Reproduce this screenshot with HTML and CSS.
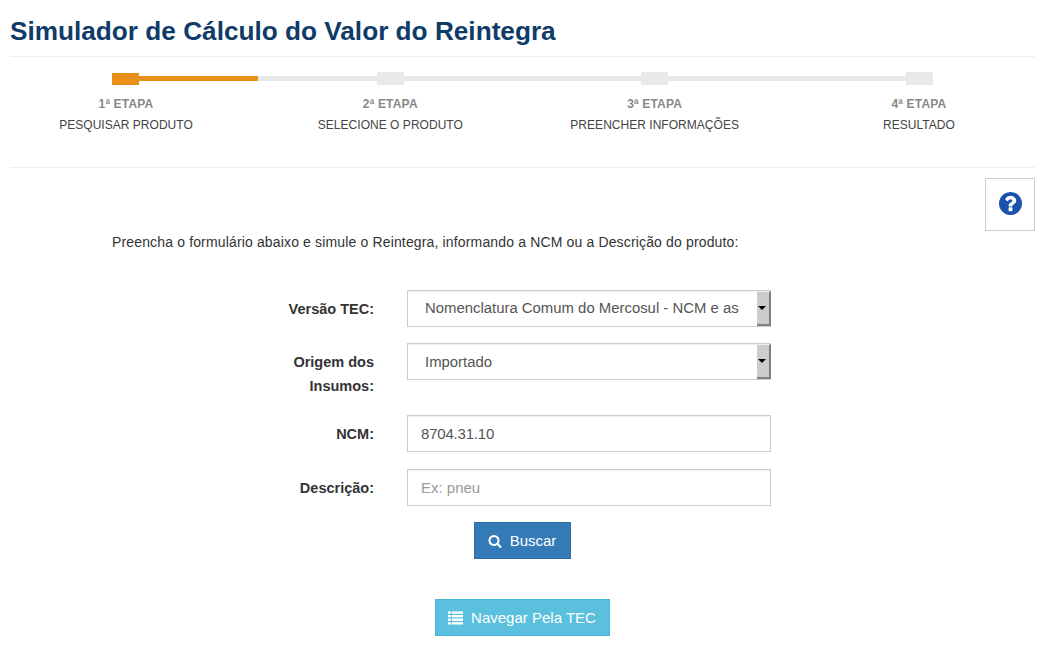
FILE: index.html
```html
<!doctype html>
<html lang="pt-BR">
<head>
    <meta charset="utf-8">
    <title>Simulador de Cálculo do Valor do Reintegra</title>
    <link rel="stylesheet" href="styles.css">
</head>
<body>
<h1 class="page-title">Simulador de Cálculo do Valor do Reintegra</h1>

<!-- Barra de etapas -->
<div class="steps">
    <div class="steps-bar">
        <span class="step-mark step-mark-active"></span>
        <span class="step-line"><span class="step-line-fill"></span></span>
        <span class="step-mark"></span>
        <span class="step-line"></span>
        <span class="step-mark"></span>
        <span class="step-line"></span>
        <span class="step-mark"></span>
    </div>
    <div class="steps-labels">
        <div class="step-label"><b>1ª ETAPA</b><span>PESQUISAR PRODUTO</span></div>
        <div class="step-label"><b>2ª ETAPA</b><span>SELECIONE O PRODUTO</span></div>
        <div class="step-label"><b>3ª ETAPA</b><span>PREENCHER INFORMAÇÕES</span></div>
        <div class="step-label"><b>4ª ETAPA</b><span>RESULTADO</span></div>
    </div>
</div>

<div class="help-row">
    <a class="help-box" href="#" title="Ajuda">
        <svg class="help-icon" viewBox="128 128 1536 1536"><path fill-rule="evenodd" d="M1024 1376v-192q0-14-9-23t-23-9h-192q-14 0-23 9t-9 23v192q0 14 9 23t23 9h192q14 0 23-9t9-23zm256-672q0-88-55.5-163t-138.5-116-170-41q-243 0-371 213-15 24 8 42l132 100q7 6 19 6 16 0 25-12 53-68 86-92 34-24 86-24 48 0 85.5 26t37.5 59q0 38-20 61t-68 45q-63 28-115.5 86.5t-52.5 125.5v36q0 14 9 23t23 9h192q14 0 23-9t9-23q0-19 21.5-49.5t54.5-49.5q32-18 49-28.5t46-35 44.5-48 28-60.5 12.5-81zm384 192q0 209-103 385.5t-279.5 279.5-385.5 103-385.5-103-279.5-279.5-103-385.5 103-385.5 279.5-279.5 385.5-103 385.5 103 279.5 279.5 103 385.5z"/></svg>
    </a>
</div>

<p class="intro">Preencha o formulário abaixo e simule o Reintegra, informando a NCM ou a Descrição do produto:</p>

<form class="search-form">
    <div class="form-row form-row-first">
        <label class="form-label">Versão TEC:</label>
        <div class="select-wrap">
            <select class="form-control form-select"><option>Nomenclatura Comum do Mercosul - NCM e as</option></select>
            <span class="select-arrow"></span>
        </div>
    </div>
    <div class="form-row">
        <label class="form-label form-label-wrap">Origem dos Insumos:</label>
        <div class="select-wrap">
            <select class="form-control form-select"><option>Importado</option></select>
            <span class="select-arrow"></span>
        </div>
    </div>
    <div class="form-row">
        <label class="form-label">NCM:</label>
        <input class="form-control form-input" type="text" value="8704.31.10">
    </div>
    <div class="form-row">
        <label class="form-label">Descrição:</label>
        <input class="form-control" type="text" placeholder="Ex: pneu">
    </div>

    <div class="actions">
        <button class="btn btn-primary" type="button">
            <svg class="btn-icon" viewBox="0 0 1792 1792"><path d="M1216 832q0-185-131.500-316.500t-316.500-131.500-316.500 131.500-131.500 316.500 131.500 316.500 316.500 131.500 316.500-131.500 131.500-316.500zm512 832q0 52-38 90t-90 38q-54 0-90-38l-343-342q-179 124-399 124-143 0-273.500-55.500t-225-150-150-225-55.500-273.500 55.500-273.500 150-225 225-150 273.500-55.500 273.500 55.500 225 150 150 225 55.500 273.500q0 220-124 399l343 343q37 37 37 90z"/></svg>
            Buscar
        </button>
        <button class="btn btn-info" type="button">
            <svg class="btn-icon btn-icon-list" viewBox="0 0 16 14"><rect y="0" width="3" height="2.500"/><rect x="4" y="0" width="12" height="2.500"/><rect y="3.800" width="3" height="2.500"/><rect x="4" y="3.800" width="12" height="2.500"/><rect y="7.600" width="3" height="2.500"/><rect x="4" y="7.600" width="12" height="2.500"/><rect y="11.400" width="3" height="2.500"/><rect x="4" y="11.400" width="12" height="2.500"/></svg>
            Navegar Pela TEC
        </button>
    </div>
</form>
</body>
</html>
```

FILE: styles.css
```css
html {
    overflow: hidden;
}

body {
    margin: 0;
    padding: 0 9px 0 10px;
    font-family: "Liberation Sans", Arial, sans-serif;
    font-size: 14px;
    line-height: 20px;
    color: #333;
    background: #fff;
}

.page-title {
    margin: 0;
    padding: 15px 0 9px;
    height: 32px;
    line-height: 32px;
    font-size: 26.2px;
    font-weight: bold;
    color: #0f3b69;
    border-bottom: 1px solid #eee;
}

/* Barra de etapas */
.steps {
    height: 110px;
    border-bottom: 1px solid #eee;
}

.steps-bar {
    display: flex;
    align-items: flex-end;
    height: 13px;
    padding: 15px 102px 0 102px;
}

.step-mark {
    width: 27px;
    height: 13px;
    background: #e9e9e9;
}

.step-mark-active {
    height: 12px;
    background: #e8901a;
}

.step-line {
    flex: 1;
    height: 5px;
    margin-bottom: 4px;
    background: #e9e9e9;
}

.step-line-fill {
    display: block;
    width: 119px;
    height: 5px;
    background: #e8901a;
}

.steps-labels {
    display: flex;
    justify-content: space-between;
    padding: 9px 1px 0 0;
}

.step-label {
    width: 231px;
    text-align: center;
    font-size: 12px;
}

.step-label b {
    display: block;
    padding-left: 1px;
    letter-spacing: .2px;
    color: #888;
}

.step-label span {
    display: block;
    margin-top: 1px;
    padding-left: 1px;
    letter-spacing: .03px;
    color: #444;
}

/* Ajuda */
.help-row {
    display: flex;
    justify-content: flex-end;
    padding-top: 10px;
}

.help-box {
    display: flex;
    align-items: center;
    justify-content: center;
    width: 48px;
    height: 51px;
    border: 1px solid #ccc;
}

.help-icon {
    width: 23px;
    height: 23px;
    margin-bottom: 2px;
    fill: #1a52ab;
}

.intro {
    margin: 0;
    padding: 1px 0 0 102px;
    letter-spacing: .15px;
}

/* Formulario */
.search-form {
    padding-top: 38px;
}

.form-row {
    display: flex;
    gap: 33px;
    margin-bottom: 17px;
}

.form-row-first {
    margin-bottom: 16px;
}

.form-label {
    width: 364px;
    padding-top: 7px;
    font-size: 14.5px;
    font-weight: bold;
    line-height: 24px;
    text-align: right;
}

.form-label-wrap {
    height: 48px;
    padding-left: 270px;
    width: 94px;
}

.select-wrap {
    position: relative;
    width: 364px;
    height: 37px;
}

.form-control {
    box-sizing: border-box;
    width: 364px;
    height: 37px;
    padding: 6px 13px;
    border: 1px solid #ccc;
    border-radius: 0;
    font-family: inherit;
    font-size: 15px;
    color: #555;
    background: #fff;
    box-shadow: inset 0 1px 1px rgba(0, 0, 0, .075);
}

.form-input {
    letter-spacing: -.2px;
}

.form-control::placeholder {
    color: #999;
}

.form-select {
    appearance: none;
    padding: 6px 30px 6px 17px;
    font-size: 14.9px;
}

.form-row-first .form-select {
    padding-bottom: 8px;
}

.select-arrow {
    position: absolute;
    top: 1px;
    right: 0;
    width: 14px;
    height: 35px;
    box-sizing: border-box;
    background: #ccc;
    border-top: 1px solid #eee;
    border-right: 2px solid #808080;
    border-bottom: 2px solid #808080;
}

.select-arrow::after {
    content: "";
    position: absolute;
    top: 14px;
    left: 1px;
    border: 4px solid transparent;
    border-top: 4px solid #000;
    border-bottom: 0;
}

.actions {
    display: flex;
    flex-direction: column;
    align-items: center;
    gap: 40px;
    width: 1024px;
    margin-top: -1px;
}

.btn {
    display: inline-flex;
    align-items: center;
    justify-content: center;
    box-sizing: border-box;
    height: 37px;
    border: 1px solid transparent;
    font-family: inherit;
    font-size: 15px;
    color: #fff;
}

.btn-primary {
    width: 97px;
    gap: 8px;
    background: #337ab7;
    border-color: #2e6da4;
}

.btn-info {
    width: 175px;
    gap: 8px;
    background: #5bc0de;
    border-color: #46b8da;
}

.btn-icon {
    width: 14px;
    height: 14px;
    fill: #fff;
}

.btn-icon-list {
    width: 15px;
}
```
